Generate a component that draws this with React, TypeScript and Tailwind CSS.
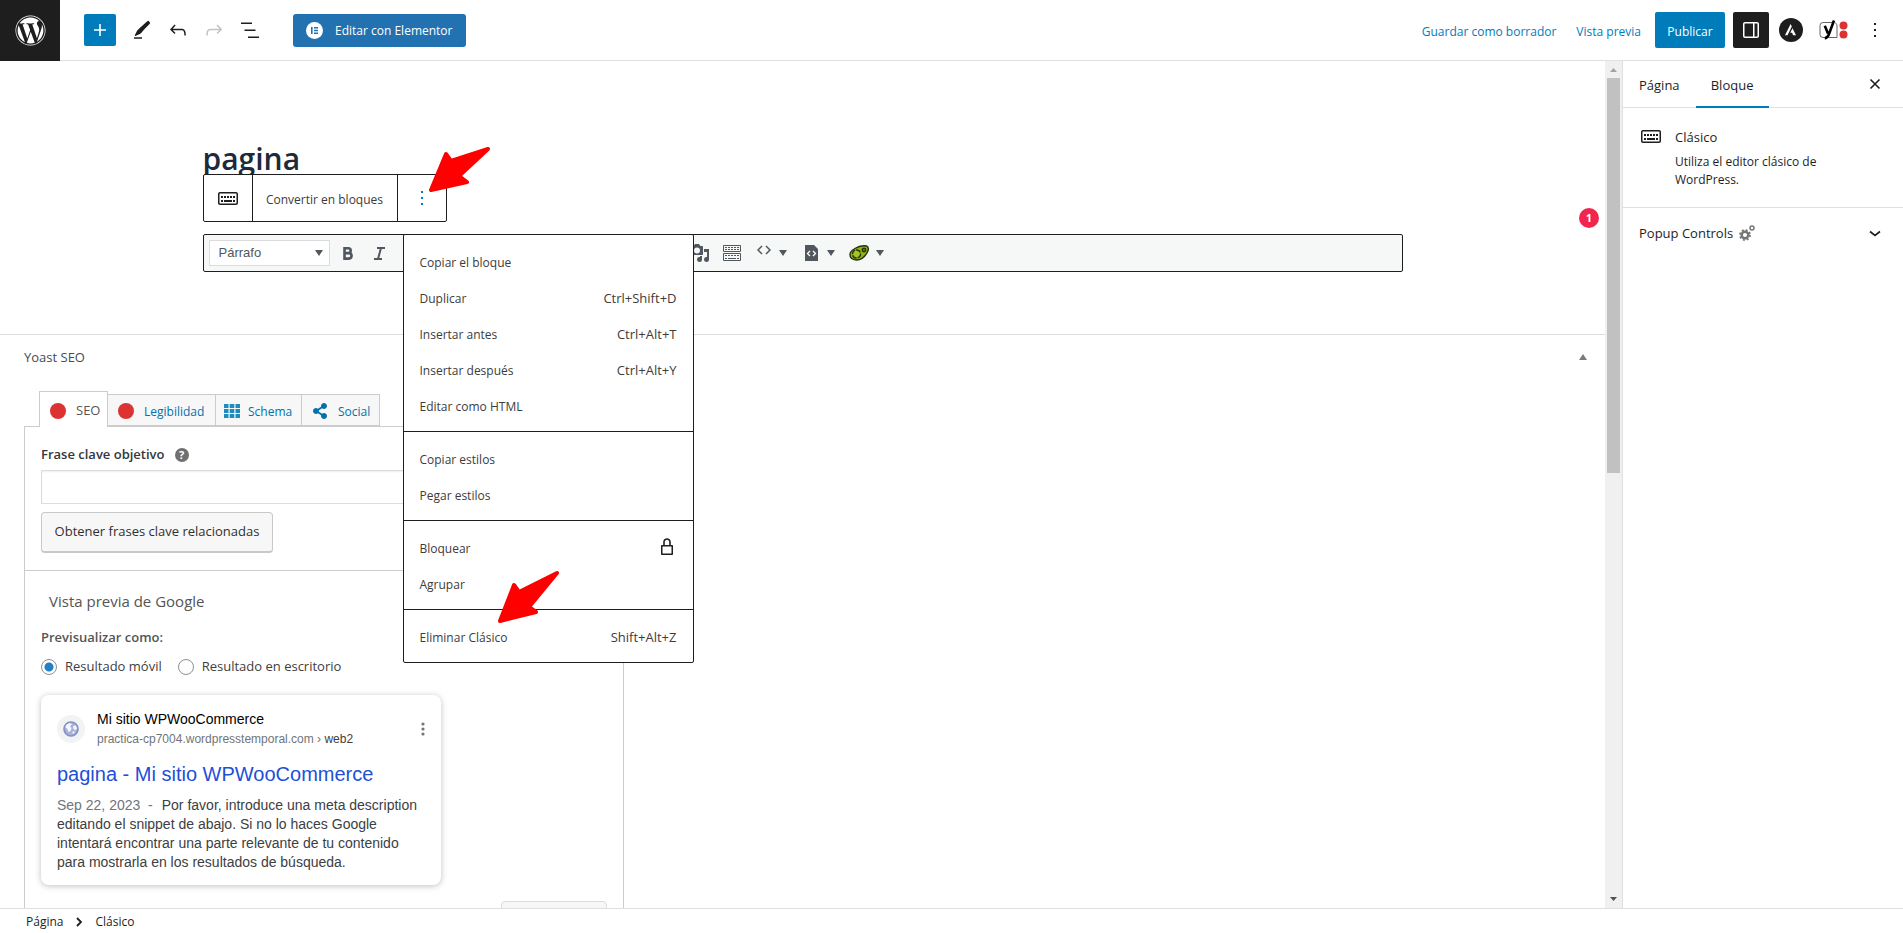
import React, { useState } from "react";
import { FaWordpress, FaShareAlt } from "react-icons/fa";

const menuGroups = [
  [
    { label: "Copiar el bloque" },
    { label: "Duplicar", keys: "Ctrl+Shift+D" },
    { label: "Insertar antes", keys: "Ctrl+Alt+T" },
    { label: "Insertar después", keys: "Ctrl+Alt+Y" },
    { label: "Editar como HTML" },
  ],
  [{ label: "Copiar estilos" }, { label: "Pegar estilos" }],
  [{ label: "Bloquear", lock: true }, { label: "Agrupar" }],
  [{ label: "Eliminar Clásico", keys: "Shift+Alt+Z", arrow: true }],
] as { label: string; keys?: string; lock?: boolean; arrow?: boolean }[][];

const KeyboardIcon = () => (
  <svg width="24" height="24" viewBox="0 0 24 24" fill="#1e1e1e">
    <path d="M20 6H4c-1.1 0-2 .9-2 2v9c0 1.1.9 2 2 2h16c1.1 0 2-.9 2-2V8c0-1.1-.9-2-2-2zm.5 11c0 .3-.2.5-.5.5H4c-.3 0-.5-.2-.5-.5V8c0-.3.2-.5.5-.5h16c.3 0 .5.2.5.5v9z" />
    <path d="M5 10h2v2H5zM8 10h2v2H8zM11 10h2v2h-2zM14 10h2v2h-2zM17 10h2v2h-2zM5 14h2v2H5zM8 14h8v2H8zM17 14h2v2h-2z" />
  </svg>
);

const MoreIcon = () => (
  <svg width="24" height="24" viewBox="0 0 24 24" fill="currentColor">
    <path d="M13 19h-2v-2h2v2zm0-6h-2v-2h2v2zm0-6h-2V5h2v2z" />
  </svg>
);

const Caret = () => (
  <svg width="8" height="6" viewBox="0 0 8 6" fill="#50575e">
    <path d="M0 0h8L4 6z" />
  </svg>
);

const Header = () => (
  <header className="flex h-[61px] shrink-0 items-center border-b border-[#e0e0e0]">
    <a
      href="#"
      aria-label="Ver páginas"
      className="-mb-px flex h-[61px] w-[60px] items-center justify-center bg-[#1e1e1e] text-white"
    >
      <FaWordpress size={31} />
    </a>
    <div className="flex items-center pl-6">
      <button
        aria-label="Añadir bloque"
        className="mr-2 flex h-8 w-8 items-center justify-center rounded-xs bg-[#007cba]"
      >
        <svg width="24" height="24" viewBox="0 0 24 24" fill="#fff">
          <path d="M18 11.2h-5.2V6h-1.6v5.2H6v1.6h5.2V18h1.6v-5.2H18z" />
        </svg>
      </button>
      <button aria-label="Herramientas" className="flex h-9 w-9 items-center justify-center">
        <svg width="24" height="24" viewBox="0 0 24 24" fill="#1e1e1e">
          <path d="m20.1 5.1-.9-1.7c-.3-.5-1-.7-1.5-.4-.1 0-5.700 5-10.500 9.500L4.800 17.200c-.2.4.2.9.6.7l5-2.200c4.500-5 9.500-10.200 9.600-10.300.1-.1.1-.2.1-.3zM4 20.800h8v-1.500H4v1.500z" />
        </svg>
      </button>
      <button aria-label="Deshacer" className="flex h-9 w-9 items-center justify-center">
        <svg width="24" height="24" viewBox="0 0 24 24" fill="#1e1e1e">
          <path d="M18.3 11.7c-.6-.6-1.400-.9-2.300-.9H6.700l2.900-3.300-1.100-1-4.500 5L8.500 16l1-1-2.700-2.700H16c.5 0 .9.2 1.300.5 1 1 1 3.400 1 4.500v.3h1.500v-.2c0-1.500 0-4.300-1.500-5.700z" />
        </svg>
      </button>
      <button aria-label="Rehacer" className="flex h-9 w-9 items-center justify-center">
        <svg width="24" height="24" viewBox="0 0 24 24" fill="#c3c3c3">
          <path d="M15.6 6.500l-1.100 1 2.900 3.300H8c-.9 0-1.700.3-2.300.9-1.400 1.500-1.400 4.200-1.400 5.600v.2h1.500v-.3c0-1.100 0-3.500 1-4.500.3-.3.7-.5 1.300-.5h9.200L14.500 15l1.100 1.100 4.600-4.600-4.600-5z" />
        </svg>
      </button>
      <button aria-label="Vista de lista" className="flex h-9 w-9 items-center justify-center">
        <svg width="24" height="24" viewBox="0 0 24 24" fill="#1e1e1e">
          <path d="M3 6h11v-1.500H3V6zm3.500 7h11v-1.500h-11V13zm3.500 5.500V20h11v-1.500H10z" />
        </svg>
      </button>
      <button className="mt-px ml-[25px] flex h-[33px] w-[173px] items-center gap-3 rounded-[3px] bg-[#2271b1] pl-[13px] font-medium text-white">
        <svg width="17" height="17" viewBox="0 0 17 17">
          <circle cx="8.5" cy="8.5" r="8.5" fill="#fff" />
          <path d="M5 5h1.600v7H5zM8 5h4v1.400H8zM8 7.800h4v1.400H8zM8 10.600h4V12H8z" fill="#2271b1" />
        </svg>
        Editar con Elementor
      </button>
    </div>
    <div className="ml-auto flex items-center pr-[10px]">
      <button className="mr-5 pt-[3px] text-[#007cba]">Guardar como borrador</button>
      <button className="mr-[14px] pt-[3px] text-[#007cba]">Vista previa</button>
      <button className="mr-2 h-9 w-[70px] rounded-xs bg-[#007cba] pt-[3px] text-white">
        Publicar
      </button>
      <button
        aria-label="Ajustes"
        className="mr-1 flex h-9 w-9 items-center justify-center rounded-xs bg-[#1e1e1e]"
      >
        <svg width="24" height="24" viewBox="0 0 24 24" fill="#fff">
          <path
            fillRule="evenodd"
            d="M18 4H6c-1.100 0-2 .9-2 2v12c0 1.100.9 2 2 2h12c1.100 0 2-.9 2-2V6c0-1.100-.9-2-2-2zm-4 14.500H6c-.3 0-.5-.2-.5-.5V6c0-.3.2-.5.5-.5h8v13zm4.500-.5c0 .3-.2.5-.5.5h-2.500v-13H18c.3 0 .5.2.5.5v12z"
          />
        </svg>
      </button>
      <button aria-label="Astra" className="flex h-9 w-9 items-center justify-center">
        <svg width="24" height="24" viewBox="0 0 24 24">
          <circle cx="12" cy="12" r="12" fill="#1e1e1e" />
          <path
            d="M11.6 6 6 17.200h2.500l4.300-8.600zM13.500 10.200l-2.300 4.600h2l.8 2.400h3z"
            fill="#fff"
          />
        </svg>
      </button>
      <button aria-label="Yoast SEO" className="flex h-9 w-12 items-center justify-center">
        <svg width="29" height="20" viewBox="0 0 29 20">
          <path
            d="M13.500 2.500H4a3 3 0 0 0-3 3v9a3 3 0 0 0 3 3h14V6c0-1.500-.6-2.600-1.800-3.200"
            fill="#fff"
            stroke="#666"
          />
          <path
            d="M5.800 5.800 9 13.500M15 .5 9.800 14.500c-.8 2-1.800 3.600-4 3.600"
            fill="none"
            stroke="#000"
            strokeWidth="2.600"
          />
          <circle cx="24.500" cy="5.500" r="4" fill="#dc3232" />
          <circle cx="24.500" cy="14.500" r="4" fill="#dc3232" />
        </svg>
      </button>
      <button
        aria-label="Opciones"
        className="flex h-9 w-9 items-center justify-center text-[#1e1e1e]"
      >
        <MoreIcon />
      </button>
    </div>
  </header>
);

const BlockMenu = () => (
  <div
    role="menu"
    className="absolute top-[59px] left-[199px] z-10 w-[291px] rounded-xs border border-[#1e1e1e] bg-white"
  >
    {menuGroups.map((group, i) => (
      <div key={i} className="border-t border-[#1e1e1e] py-2 first:border-t-0">
        {group.map((item) => (
          <button
            key={item.label}
            role="menuitem"
            className="relative flex h-9 w-full items-center justify-between px-4 pt-1 text-[#3c3c3c]"
          >
            {item.label}
            {item.keys && <span className="text-[13px]">{item.keys}</span>}
            {item.lock && (
              <svg
                width="24"
                height="24"
                viewBox="0 0 24 24"
                fill="#1e1e1e"
                className="-mt-1 -mr-0.5"
              >
                <path d="M17 10h-1.200V7c0-2.100-1.700-3.800-3.800-3.800-2.100 0-3.800 1.700-3.800 3.800v3H7c-.6 0-1 .4-1 1v8c0 .6.4 1 1 1h10c.6 0 1-.4 1-1v-8c0-.6-.4-1-1-1zM9.800 7c0-1.200 1-2.200 2.200-2.200 1.200 0 2.200 1 2.200 2.200v3H9.800V7zm6.700 11.500h-9v-7h9v7z" />
              </svg>
            )}
            {item.arrow && (
              <svg
                className="absolute bottom-[30px] left-[93px]"
                width="64"
                height="54"
                viewBox="0 0 64 54"
                fill="#f00"
                stroke="#f00"
                strokeWidth="4"
                strokeLinejoin="round"
              >
                <path d="M3 51 17 15l5 7L60 3 32 37l7 5z" />
              </svg>
            )}
          </button>
        ))}
      </div>
    ))}
  </div>
);

const BlockToolbar = () => {
  const [isOpen, setIsOpen] = useState(true);
  return (
    <div className="relative flex h-12 w-[244px] rounded-xs border border-[#1e1e1e] bg-white">
      <button
        aria-label="Clásico"
        className="flex w-[49px] items-center justify-center border-r border-[#1e1e1e]"
      >
        <KeyboardIcon />
      </button>
      <button className="flex-1 border-r border-[#1e1e1e] pt-[3px] text-[#3c3c3c]">
        Convertir en bloques
      </button>
      <button
        aria-label="Opciones"
        onClick={() => setIsOpen(!isOpen)}
        className="flex w-12 items-center justify-center text-[#007cba]"
      >
        <MoreIcon />
      </button>
      {isOpen && <BlockMenu />}
      <svg
        className="absolute -top-7 left-[224px] z-20"
        width="64"
        height="48"
        viewBox="0 0 64 48"
        fill="#f00"
        stroke="#f00"
        strokeWidth="4"
        strokeLinejoin="round"
      >
        <path d="M3 43 18 7l5 7L60 2 31 29l8 6z" />
      </svg>
    </div>
  );
};

const ClassicBar = () => (
  <div className="mt-3 flex h-[38px] items-center rounded-xs border border-[#1e1e1e] bg-[#f6f7f7] pl-[5px] text-[#50575e]">
    <div className="relative flex items-center">
      <select
        aria-label="Formato"
        className="h-[26px] w-[121px] appearance-none border border-[#dcdcde] bg-white pl-[9px] font-['Liberation_Sans',sans-serif] text-[13px]"
      >
        <option>Párrafo</option>
      </select>
      <span className="pointer-events-none absolute right-[7px]">
        <Caret />
      </span>
    </div>
    <button aria-label="Negrita" className="ml-3 flex w-3 justify-center">
      <svg width="10" height="13" viewBox="0 0 10 13" fill="none" stroke="#50575e" strokeWidth="2.6">
        <path d="M1.500 1.300h3.800a2.300 2.300 0 0 1 0 4.800H1.500zM1.500 6.100h4.300a2.700 2.700 0 0 1 0 5.500H1.500z" />
      </svg>
    </button>
    <button aria-label="Cursiva" className="ml-5 flex w-3 justify-center">
      <svg width="11" height="13" viewBox="0 0 11 13" fill="none" stroke="#50575e" strokeWidth="2">
        <path d="M3 1h8M0 12h8M7 1 4 12" />
      </svg>
    </button>
    <button aria-label="Añadir medios" className="ml-[304px]">
      <svg width="20" height="20" viewBox="0 0 20 20" fill="#50575e">
        <path d="M13 11V4c0-.55-.45-1-1-1h-1.670L9 1H5L3.670 3H2c-.55 0-1 .45-1 1v7c0 .55.45 1 1 1h10c.55 0 1-.45 1-1zM7 4.500a3 3 0 1 1 0 6 3 3 0 0 1 0-6zM14 6h5v10.500a2.500 2.500 0 1 1-2-2.450V9h-3V6zm-4 8.050V13h2v3.500a2.500 2.500 0 1 1-2-2.450z" />
      </svg>
    </button>
    <button aria-label="Más opciones" className="ml-3">
      <svg width="20" height="20" viewBox="0 0 20 20" fill="none" stroke="#50575e">
        <path d="M1.500 2.500h17v6h-17zM1.500 10.500h17v7h-17z" />
        <path d="M3 4.500h14M3 6.500h14M3 12.500h14" strokeDasharray="2 1" />
        <path d="M3 15.500h2M6 15.500h8M15 15.500h2" />
      </svg>
    </button>
    <button aria-label="Código" className="ml-[15px] flex items-center gap-2">
      <svg
        width="14"
        height="12"
        viewBox="0 0 14 12"
        fill="none"
        stroke="#50575e"
        strokeWidth="1.5"
        className="mb-1"
      >
        <path d="M5 1 1 5l4 4M9 1l4 4-4 4" />
      </svg>
      <Caret />
    </button>
    <button aria-label="Insertar código" className="ml-[18px] flex items-center gap-[9px]">
      <svg width="13" height="16" viewBox="0 0 13 16" fill="#50575e">
        <path d="M0 0h9l4 4v12H0z" />
        <path d="M5 6 2.500 8.500 5 11M8 6l2.500 2.500L8 11" fill="none" stroke="#fff" strokeWidth="1.3" />
      </svg>
      <Caret />
    </button>
    <button aria-label="Insertar bloque verde" className="ml-[14px] flex items-center gap-[7px]">
      <svg width="20" height="16" viewBox="0 0 20 16">
        <path
          d="M6 3.500C9 1.500 14 .5 17.500 1c2 .5 2.200 3.500 1.200 5.500C16.500 11 12.500 15 7.500 15 2.500 15 1 12.500 1 9.500 1 7 3.500 4.800 6 3.500z"
          fill="#8fb31d"
          stroke="#26300a"
          strokeWidth="1.4"
        />
        <circle
          cx="7.5"
          cy="9"
          r="4"
          fill="#a2c626"
          stroke="#26300a"
          strokeWidth="1.3"
          strokeDasharray="5 1"
        />
        <circle cx="15" cy="5" r="1.8" fill="#5c7a10" stroke="#26300a" strokeWidth="1.3" />
      </svg>
      <Caret />
    </button>
  </div>
);

const GooglePreview = () => (
  <article className="mt-5 h-[190px] w-[400px] rounded-lg bg-white px-4 pt-3 font-['Liberation_Sans',sans-serif] shadow-[0_1px_6px_rgba(32,33,36,0.28)]">
    <div className="flex items-center pt-0.5">
      <span className="mr-3 flex h-7 w-7 items-center justify-center rounded-full bg-[#f1f3f4]">
        <svg width="16" height="16" viewBox="0 0 16 16">
          <circle cx="8" cy="8" r="7" fill="#a9b2d8" stroke="#8390c2" strokeWidth="1.6" />
          <path d="M3 4 6.500 2 9 3 7 5.500 8.500 7 7.500 10 5.500 11 4.500 8 2.500 6.500zM10 5l3-.5 1 3.500-2 1-1.500-1zM9 11l3-1-1.500 3z" fill="#f3f6fb" />
        </svg>
      </span>
      <div className="flex-1">
        <div className="text-sm leading-5 text-black">Mi sitio WPWooCommerce</div>
        <div className="text-xs leading-5 text-[#70757a]">
          practica-cp7004.wordpresstemporal.com › <span className="text-[#3c4043]">web2</span>
        </div>
      </div>
      <svg width="4" height="14" viewBox="0 0 4 14" fill="#70757a">
        <circle cx="2" cy="2" r="1.6" />
        <circle cx="2" cy="7" r="1.6" />
        <circle cx="2" cy="12" r="1.6" />
      </svg>
    </div>
    <a href="#" className="mt-3 block text-xl leading-[26px] text-[#1e4fd8]">
      pagina - Mi sitio WPWooCommerce
    </a>
    <p className="mt-[9px] text-sm leading-[19px] text-[#3c4043]">
      <span className="mr-[9px] text-[#70757a]">Sep 22, 2023 &nbsp;-</span>
      Por favor, introduce una meta description editando el snippet de abajo. Si no lo haces
      Google intentará encontrar una parte relevante de tu contenido para mostrarla en los
      resultados de búsqueda.
    </p>
  </article>
);

const tabClass =
  "-mr-px flex h-8 items-center border border-[#ccc] bg-[#f7f7f7] pt-px text-[13px] text-[#0073aa]";

const YoastBox = () => {
  const [view, setView] = useState("mobile");
  const radio =
    "h-4 w-4 appearance-none rounded-full border border-[#8c8f94] bg-white checked:bg-[radial-gradient(circle,#2180c4_4px,transparent_5px)]";
  return (
    <section className="border-t border-[#ddd]">
      <div className="flex h-11 items-center justify-between pr-[18px] pl-6">
        <h2 className="pt-0.5 text-[13px] font-medium text-[#444b53]">Yoast SEO</h2>
        <button aria-label="Contraer">
          <svg width="8" height="6" viewBox="0 0 8 6" fill="#787c82">
            <path d="M0 6h8L4 0z" />
          </svg>
        </button>
      </div>
      <div className="relative z-[1] mt-3 flex items-end pl-[39px]">
        <button className="-mr-px -mb-px flex h-9 w-[69px] items-center border border-b-0 border-[#ccc] bg-white pt-0.5 pl-[10px] text-[13px] text-[#555]">
          <span className="mr-[10px] h-4 w-4 rounded-full bg-[#dc3232]" />
          SEO
        </button>
        <button className={`${tabClass} w-[109px] pl-[10px]`}>
          <span className="mr-[10px] h-4 w-4 rounded-full bg-[#dc3232]" />
          <span className="pt-[3px] text-xs">Legibilidad</span>
        </button>
        <button className={`${tabClass} w-[87px] pl-2`}>
          <svg width="16" height="14" viewBox="0 0 16 14" fill="#1e8cbe" className="mr-2">
            <path d="M0 0h4.500v4H0zM5.700 0h4.600v4H5.700zM11.500 0H16v4h-4.500zM0 5h4.500v4H0zM5.700 5h4.600v4H5.700zM11.500 5H16v4h-4.500zM0 10h4.500v4H0zM5.700 10h4.600v4H5.700zM11.500 10H16v4h-4.500z" />
          </svg>
          <span className="pt-[3px] text-xs">Schema</span>
        </button>
        <button className={`${tabClass} w-[79px] pl-[10px]`}>
          <FaShareAlt size={16} className="mr-[10px]" />
          <span className="pt-[3px] text-xs">Social</span>
        </button>
      </div>
      <div className="ml-6 w-[600px] border border-[#ccc]">
        <div className="h-[143px] px-4 pt-4">
          <div className="flex h-6 items-center gap-[10px]">
            <label htmlFor="keyphrase" className="text-[13px] font-semibold text-[#32373c]">
              Frase clave objetivo
            </label>
            <button
              aria-label="Ayuda"
              className="h-[14px] w-[14px] rounded-full bg-[#707070] text-[11px] leading-[14px] font-bold text-white"
            >
              ?
            </button>
          </div>
          <input
            id="keyphrase"
            type="text"
            className="mt-[3px] block h-[34px] w-full border border-[#ddd] px-2 shadow-[inset_0_1px_2px_rgba(0,0,0,0.07)]"
          />
          <button className="mt-2 h-[41px] w-[232px] rounded-sm border border-b-2 border-[#c8c8c8] bg-[#f7f7f7] text-[13px] text-[#303030]">
            Obtener frases clave relacionadas
          </button>
        </div>
        <div className="border-t border-[#ccc] px-4 pt-[18px]">
          <h3 className="pl-2 text-[15px] leading-6 text-[#555]">Vista previa de Google</h3>
          <fieldset className="mt-3">
            <legend className="text-[13px] leading-6 font-semibold text-[#555]">
              Previsualizar como:
            </legend>
            <div className="mt-[9px] flex items-center text-[13px] text-[#404040]">
              <label className="mr-4 flex items-center gap-2">
                <input
                  type="radio"
                  name="view"
                  className={radio}
                  checked={view === "mobile"}
                  onChange={() => setView("mobile")}
                />
                Resultado móvil
              </label>
              <label className="flex items-center gap-2">
                <input
                  type="radio"
                  name="view"
                  className={radio}
                  checked={view === "desktop"}
                  onChange={() => setView("desktop")}
                />
                Resultado en escritorio
              </label>
            </div>
          </fieldset>
          <GooglePreview />
          <button
            aria-label="Editar snippet"
            className="mt-4 ml-auto block h-8 w-[106px] rounded-sm border border-[#ddd] bg-[#f7f7f7]"
          />
        </div>
      </div>
    </section>
  );
};

const Sidebar = () => (
  <aside className="w-[281px] shrink-0 border-l border-[#e0e0e0] text-[#1e1e1e]">
    <div className="flex h-[47px] items-stretch border-b border-[#e0e0e0]">
      <button className="px-4 pt-[3px] text-[13px] font-medium">Página</button>
      <button className="-mb-px w-[73px] border-b-2 border-[#007cba] pt-1 text-[13px] font-medium">
        Bloque
      </button>
      <button aria-label="Cerrar" className="mr-4 ml-auto">
        <svg width="24" height="24" viewBox="0 0 24 24" stroke="#1e1e1e" strokeWidth="1.6">
          <path d="m7.500 7.500 9 9M16.500 7.500l-9 9" />
        </svg>
      </button>
    </div>
    <div className="flex h-[100px] gap-3 border-b border-[#e0e0e0] px-4 pt-4">
      <KeyboardIcon />
      <div>
        <h2 className="pt-px text-[13px] leading-6 font-medium">Clásico</h2>
        <p className="mt-1 w-44 leading-[18px]">Utiliza el editor clásico de WordPress.</p>
      </div>
    </div>
    <button className="flex h-[50px] w-full items-center px-4 text-[13px] font-medium">
      <span className="pt-0.5">Popup Controls</span>
      <svg width="16" height="16" viewBox="0 0 16 16" fill="none" stroke="#757575" className="ml-1.5">
        <circle cx="6" cy="10" r="3.3" strokeWidth="2.4" />
        <circle cx="6" cy="10" r="5" strokeWidth="1.8" strokeDasharray="2 1.93" />
        <circle cx="13" cy="3" r="2" strokeWidth="1.5" />
      </svg>
      <svg
        width="24"
        height="24"
        viewBox="0 0 24 24"
        fill="none"
        stroke="#1e1e1e"
        strokeWidth="1.7"
        className="ml-auto"
      >
        <path d="m7 10.500 5 4 5-4" />
      </svg>
    </button>
  </aside>
);

const ScrollTrack = () => (
  <div className="flex w-[17px] shrink-0 flex-col items-center bg-[#f0f0f0]">
    <svg width="17" height="17" viewBox="0 0 17 17" fill="#a3a3a3">
      <path d="M5 11h7L8.500 7z" />
    </svg>
    <div className="h-[395px] w-[13px] bg-[#c1c1c1]" />
    <svg width="17" height="17" viewBox="0 0 17 17" fill="#505050" className="mt-auto">
      <path d="M5 6h7l-3.500 4z" />
    </svg>
  </div>
);

export default function App() {
  return (
    <div className="flex h-screen flex-col bg-white font-['Open_Sans','Noto_Sans',sans-serif] text-xs">
      <Header />
      <div className="flex min-h-0 flex-1">
        <main className="relative min-w-0 flex-1 overflow-hidden">
          <div className="mx-auto h-[273px] max-w-[1200px] pt-[76px]">
            <h1 className="h-[37px] text-[30px] leading-[44px] font-semibold text-[#1e293b]">
              pagina
            </h1>
            <BlockToolbar />
            <ClassicBar />
          </div>
          <span className="absolute top-[147px] right-[6px] flex h-5 w-5 items-center justify-center rounded-full bg-[#f0264f] text-[11px] font-bold text-white">
            1
          </span>
          <YoastBox />
        </main>
        <ScrollTrack />
        <Sidebar />
      </div>
      <footer className="flex h-[25px] shrink-0 items-center gap-3 border-t border-[#e0e0e0] pt-px pl-[26px] text-[#1e1e1e]">
        <a href="#">Página</a>
        <svg width="8" height="10" viewBox="0 0 8 10" fill="none" stroke="#1e1e1e" strokeWidth="1.8">
          <path d="m2 1 4 4-4 4" />
        </svg>
        <span>Clásico</span>
      </footer>
    </div>
  );
}
